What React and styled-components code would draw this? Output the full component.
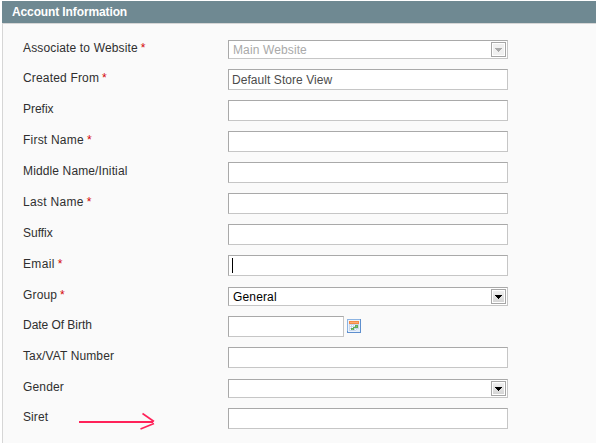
import React from "react";
import styled, { createGlobalStyle } from "styled-components";

const GlobalStyle = createGlobalStyle`
  * { box-sizing: border-box; }
  body { margin: 0; background: #fff; overflow: hidden; }
`;

const Page = styled.main`
  width: 596px;
  height: 443px;
  padding: 1px 0 0 2px;
  display: flex;
  flex-direction: column;
  font: 12px/15px "Liberation Sans", Arial, sans-serif;
  color: #2f2f2f;
`;

const Header = styled.h1`
  margin: 0;
  height: 22px;
  padding: 0 10px;
  background: #6f8992;
  color: #fff;
  font-size: 12px;
  font-weight: bold;
  line-height: 22px;
  letter-spacing: -0.12px;
`;

const Fieldset = styled.form`
  flex: 1;
  padding: 15px 0 0 20px;
  background: #fafafa;
  border: solid #d6d6d6;
  border-width: 1px 0 0 1px;
`;

const Row = styled.div`
  display: flex;
  align-items: flex-start;
  height: ${(p) => (p.$select ? 30 : 31)}px;
`;

const Label = styled.label`
  width: 205px;
  padding-top: 2px;
  white-space: nowrap;
`;

const LabelText = styled.span`
  letter-spacing: ${(p) => p.$spacing || 0}px;
`;

const Required = styled.span`
  margin-left: 3px;
  color: #d40707;
`;

const Field = styled.div`
  display: flex;
  align-items: center;
  width: ${(p) => (p.$short ? 116 : 280)}px;
  height: 21px;
  padding-left: 3px;
  background: #fff;
  border: 1px solid;
  border-color: #a9a9a9 #c6c6c6 #c6c6c6 #a9a9a9;
  color: #4c4c4c;
`;

const SelectField = styled(Field)`
  justify-content: space-between;
  height: 19px;
  margin-top: 1px;
  padding: 0 1px 0 4px;
  color: ${(p) => (p.$disabled ? "#a9a9a9" : "#000")};
`;

const Value = styled.span`
  padding-top: 2px;
  line-height: 15px;
  white-space: nowrap;
  letter-spacing: ${(p) => p.$spacing || 0}px;
`;

const DropButton = styled.span`
  display: flex;
  align-items: center;
  justify-content: center;
  width: 15px;
  height: 15px;
  border: 1px solid #a6a6a6;
  background: ${(p) => (p.$disabled ? "#f0f0f0" : "linear-gradient(#f3f3f3, #d2d2d2)")};
  box-shadow: inset 0 0 0 1px #fff;
  color: ${(p) => (p.$disabled ? "#a9a9a9" : "#000")};
`;

const Caret = styled.span`
  width: 1px;
  height: 15px;
  background: #000;
`;

const CalendarIcon = styled.svg`
  display: block;
  margin: 3px 0 0 3px;
`;

// The pointer lies over the gap between a label and its field.
const PointerArrow = styled.svg`
  position: absolute;
  left: 78px;
  top: 412px;
`;

const FIELDS = [
  { label: "Associate to Website", spacing: 0.15, required: true, type: "select", value: "Main Website", valueSpacing: 0.12, disabled: true },
  { label: "Created From", spacing: 0.17, required: true, value: "Default Store View", valueSpacing: 0.06 },
  { label: "Prefix", spacing: -0.02 },
  { label: "First Name", spacing: 0.22, required: true },
  { label: "Middle Name/Initial", spacing: 0.13 },
  { label: "Last Name", spacing: 0.3, required: true },
  { label: "Suffix", spacing: -0.02 },
  { label: "Email", spacing: 0.35, required: true, focused: true },
  { label: "Group", spacing: 0.15, required: true, type: "select", value: "General", valueSpacing: 0.15 },
  { label: "Date Of Birth", spacing: -0.04, type: "date" },
  { label: "Tax/VAT Number", spacing: 0.12 },
  { label: "Gender", spacing: 0.15, type: "select" },
  { label: "Siret", spacing: 0.1, marked: true },
];

function Calendar() {
  return (
    <CalendarIcon width="14" height="14" viewBox="0 0 14 14" shapeRendering="crispEdges">
      <path fill="#5e8fce" d="M0 0h14v14H0z" />
      <path fill="#8db4e2" d="M0 0h13v1H0zM0 1h1v11H0z" />
      <path fill="#edf4fc" d="M1 1h12v12H1z" />
      <path fill="#f58b45" d="M2 2h10v3H2z" />
      <path fill="#ffab70" d="M3 3h8v1H3z" />
      <path fill="#c9d8ec" d="M2 5h10v7H2z" />
      <path
        fill="#fff"
        d="M3 6h1v1H3zM5 6h1v1H5zM7 6h1v1H7zM3 8h1v1H3zM5 8h1v1H5zM3 10h1v1H3zM8 10h1v1H8z"
      />
      <path fill="#63ad58" d="M8 6h3v3H8zM4 9h3v2H4zM6 8h2v1H6z" />
      <path fill="#86c27b" d="M9 7h1v1H9zM5 10h1v1H5z" />
      <path fill="#e4eefa" d="M9 12v-1h1v-1h3v3H9z" />
    </CalendarIcon>
  );
}

function Pointer() {
  return (
    <PointerArrow width="78" height="19" viewBox="0 0 78 19">
      <path fill="none" stroke="#ff2259" strokeWidth="2" d="M1 10H75" />
      <path fill="none" stroke="#ff2259" strokeWidth="1.6" d="M64.5 1.5L76 9.5M62.5 17L76 11.5" />
    </PointerArrow>
  );
}

function Dropdown({ value, spacing, disabled }) {
  return (
    <SelectField $disabled={disabled}>
      <Value $spacing={spacing}>{value}</Value>
      <DropButton $disabled={disabled}>
        <svg width="7" height="4" shapeRendering="crispEdges">
          <path fill="currentColor" d="M0 0h7v1H6v1H5v1H4v1H3V3H2V2H1V1H0z" />
        </svg>
      </DropButton>
    </SelectField>
  );
}

function FormRow({ label, spacing, required, type, value, valueSpacing, disabled, focused, marked }) {
  const select = type === "select";
  return (
    <Row $select={select}>
      <Label>
        <LabelText $spacing={spacing}>{label}</LabelText>
        {required && <Required>*</Required>}
      </Label>
      {select ? (
        <Dropdown value={value} spacing={valueSpacing} disabled={disabled} />
      ) : (
        <Field $short={type === "date"}>
          {focused ? <Caret /> : <Value $spacing={valueSpacing}>{value}</Value>}
        </Field>
      )}
      {type === "date" && <Calendar />}
      {marked && <Pointer />}
    </Row>
  );
}

export default function App() {
  return (
    <>
      <GlobalStyle />
      <Page>
        <Header>Account Information</Header>
        <Fieldset>
          {FIELDS.map((field) => (
            <FormRow key={field.label} {...field} />
          ))}
        </Fieldset>
      </Page>
    </>
  );
}
